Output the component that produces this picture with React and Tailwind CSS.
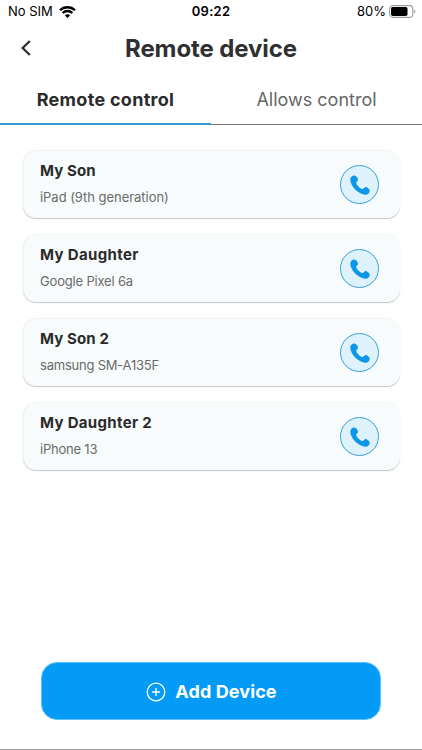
import React from 'react';

const devices = [
  { name: 'My Son', model: 'iPad (9th generation)', nameStyle: 'tracking-[0.12px]', modelStyle: 'tracking-[-0.04px]' },
  { name: 'My Daughter', model: 'Google Pixel 6a', nameStyle: 'tracking-[0.35px]', modelStyle: 'tracking-[-0.18px]' },
  { name: 'My Son 2', model: 'samsung SM-A135F', nameStyle: 'tracking-[0.12px]', modelStyle: 'tracking-[-0.22px]' },
  { name: 'My Daughter 2', model: 'iPhone 13', nameStyle: 'tracking-[0.32px]', modelStyle: 'tracking-[-0.22px]' },
];

const WifiIcon = () => (
  <svg className="w-[17px] h-3" viewBox="0 0 17 12" fill="none" stroke="#000" strokeWidth="2.3">
    <path d="M1 4.3C5.2 0.2 11.8 0.2 16 4.3" />
    <path d="M3.6 7C6.4 4.3 10.6 4.3 13.4 7" />
    <path d="M8.5 12L5.9 9.4C7.4 8 9.6 8 11.1 9.4Z" fill="#000" stroke="none" />
  </svg>
);

const BatteryIcon = () => (
  <svg className="mb-px w-[27px] h-[13px]" viewBox="0 0 27 13" fill="none">
    <rect x="0.6" y="0.6" width="23.2" height="11.8" rx="3.4" stroke="#9b9b9b" strokeWidth="1.1" />
    <rect x="2" y="2" width="16.5" height="9" rx="1.8" fill="#000" />
    <path d="M25.2 4.6C26.8 5.1 26.8 7.9 25.2 8.4Z" fill="#9b9b9b" />
  </svg>
);

const PhoneIcon = () => (
  <svg className="w-5 h-5" viewBox="0 0 20 20" fill="#0c96ea">
    <path d="M1.6 1.5C2.9 0.2 4.8 0.1 6 1.3C7.1 2.4 8.2 4 7.9 5.2C7.6 6.3 6.1 6.9 6.2 8C6.4 9.5 7.9 11.1 9.2 12.2C10.4 13.2 11.7 14.2 12.8 14C14 13.6 14.1 12 15.5 11.9C16.9 11.9 18.3 13.1 19.1 14.3C20.2 15.9 19.6 17.5 18.4 18.7C16.9 20 14.5 19.8 12 18.9C6.8 16.8 2.8 12.7 1 8C0.1 5.5 0 3.2 1.6 1.5Z" />
  </svg>
);

const DeviceCard = ({ device }) => (
  <div className="flex h-[68px] items-start justify-between rounded-[13px] border-t border-l border-[#f0f2f4] bg-[#f7fbfc] pt-[9px] pl-4 pr-[21px] shadow-[0px_1px_1px_#c4c6cc]">
    <div className="flex flex-col pt-px">
      <h2 className={`text-[15px] leading-5 font-bold text-[#2b2b2b] ${device.nameStyle}`}>{device.name}</h2>
      <p className={`mt-[7px] text-[13px] leading-[18px] text-[#6b6b6b] ${device.modelStyle}`}>{device.model}</p>
    </div>
    <button className="mt-[5px] flex h-[39px] w-[39px] items-center justify-center rounded-full border border-[#389fdd] bg-[#def2fb]">
      <PhoneIcon />
    </button>
  </div>
);

const App = () => {
  return (
    <div className="flex h-[750px] w-[422px] flex-col overflow-hidden border-b border-[#9a9a9a] bg-white font-['Inter',sans-serif]">
      {/* Status bar */}
      <div className="grid h-6 grid-cols-3 items-center pl-2 pr-[6px] text-[13px] text-black">
        <div className="flex items-center gap-[6px]">
          <span>No SIM</span>
          <WifiIcon />
        </div>
        <span className="pr-[2px] text-center font-semibold tracking-[0.25px]">09:22</span>
        <div className="flex items-center justify-end gap-[3px]">
          <span>80%</span>
          <BatteryIcon />
        </div>
      </div>

      {/* Header */}
      <header className="grid h-12 grid-cols-[60px_1fr_60px] items-center">
        <button className="pl-[21px]">
          <svg className="w-[10px] h-4" viewBox="0 0 10 16" fill="none" stroke="#303030" strokeWidth="2.4">
            <path d="M8.8 1L1.7 8L8.8 15" />
          </svg>
        </button>
        <h1 className="pt-[2px] text-center text-2xl font-bold tracking-[-0.1px] text-[#303030]">Remote device</h1>
      </header>

      {/* Tabs */}
      <nav className="grid h-[53px] grid-cols-2 text-lg">
        <button className="border-b-2 border-[#3398d4] pt-1 font-bold tracking-[0.3px] text-[#2b2b2b]">Remote control</button>
        <button className="border-b border-[#777] pt-[3px] text-[#666]">Allows control</button>
      </nav>

      <main className="flex flex-1 flex-col gap-4 pt-[25px] pl-[23px] pr-[22px]">
        {devices.map((device) => (
          <DeviceCard key={device.name} device={device} />
        ))}
      </main>

      <button className="mb-[29px] ml-[41px] flex h-[58px] w-[340px] items-center justify-center gap-[9px] rounded-2xl border border-[#5cc0fa] bg-[#039bf5] pt-px pl-px text-lg font-bold tracking-[0.1px] text-white">
        <svg className="w-5 h-5" viewBox="0 0 20 20" fill="none" stroke="#fff" strokeWidth="1.3">
          <circle cx="10" cy="10" r="8.8" />
          <path d="M10 6V14M6 10H14" />
        </svg>
        Add Device
      </button>
    </div>
  );
};

export default App;
